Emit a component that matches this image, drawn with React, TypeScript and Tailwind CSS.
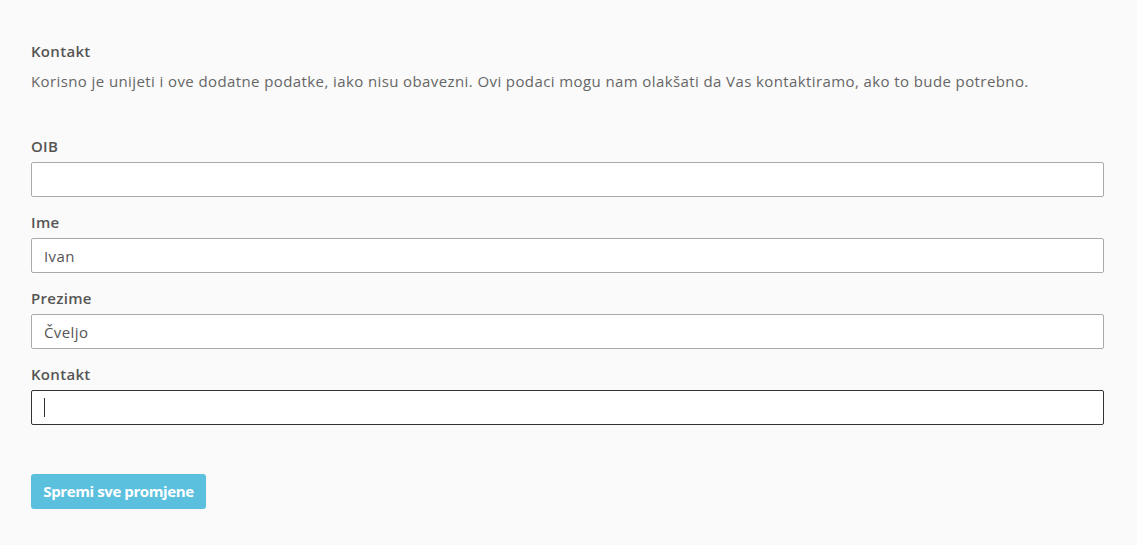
import React from 'react';

const fields = [
  { label: 'OIB', value: '' },
  { label: 'Ime', value: 'Ivan' },
  { label: 'Prezime', value: 'Čveljo' },
];

const App: React.FC = () => {
  return (
    <div className="min-h-screen bg-[#fafafa] text-[#555] font-['Open_Sans','Lato',sans-serif] pl-[31px] pr-[33px] pt-[41px] pb-[37px]">
      <h2 className="text-[15px] leading-5 font-semibold tracking-[0.3px] text-[#555]">Kontakt</h2>
      <p className="mt-[10px] text-[15px] leading-5 tracking-[0.4px] text-[#666]">
        Korisno je unijeti i ove dodatne podatke, iako nisu obavezni. Ovi podaci mogu nam olakšati da Vas kontaktiramo, ako to bude potrebno.
      </p>

      <form className="mt-[45px] flex flex-col gap-[15px]" onSubmit={(e) => e.preventDefault()}>
        {fields.map((f) => (
          <div key={f.label}>
            <label className="block text-[15px] leading-5 font-semibold tracking-[0.3px] text-[#555] mb-[6px]">{f.label}</label>
            <input
              type="text"
              defaultValue={f.value}
              className="block w-full h-[35px] px-3 bg-white border border-[#aaa] rounded-[2px] text-[15px] tracking-[0.4px] text-[#555] outline-none"
            />
          </div>
        ))}
        <div>
          <label className="block text-[15px] leading-5 font-semibold tracking-[0.3px] text-[#555] mb-[6px]">Kontakt</label>
          <div className="relative">
            <input
              type="text"
              className="block w-full h-[35px] px-3 bg-white border border-[#333] rounded-[2px] text-[15px] text-[#555] outline-none"
            />
            <span className="absolute left-[13px] top-[8px] w-px h-[19px] bg-[#333]" />
          </div>
        </div>
      </form>

      <button className="mt-[49px] h-[35px] w-[175px] rounded-[3px] bg-[#5bc0de] text-white text-[15px] font-bold tracking-[-0.4px]">
        Spremi sve promjene
      </button>
    </div>
  );
};

export default App;
